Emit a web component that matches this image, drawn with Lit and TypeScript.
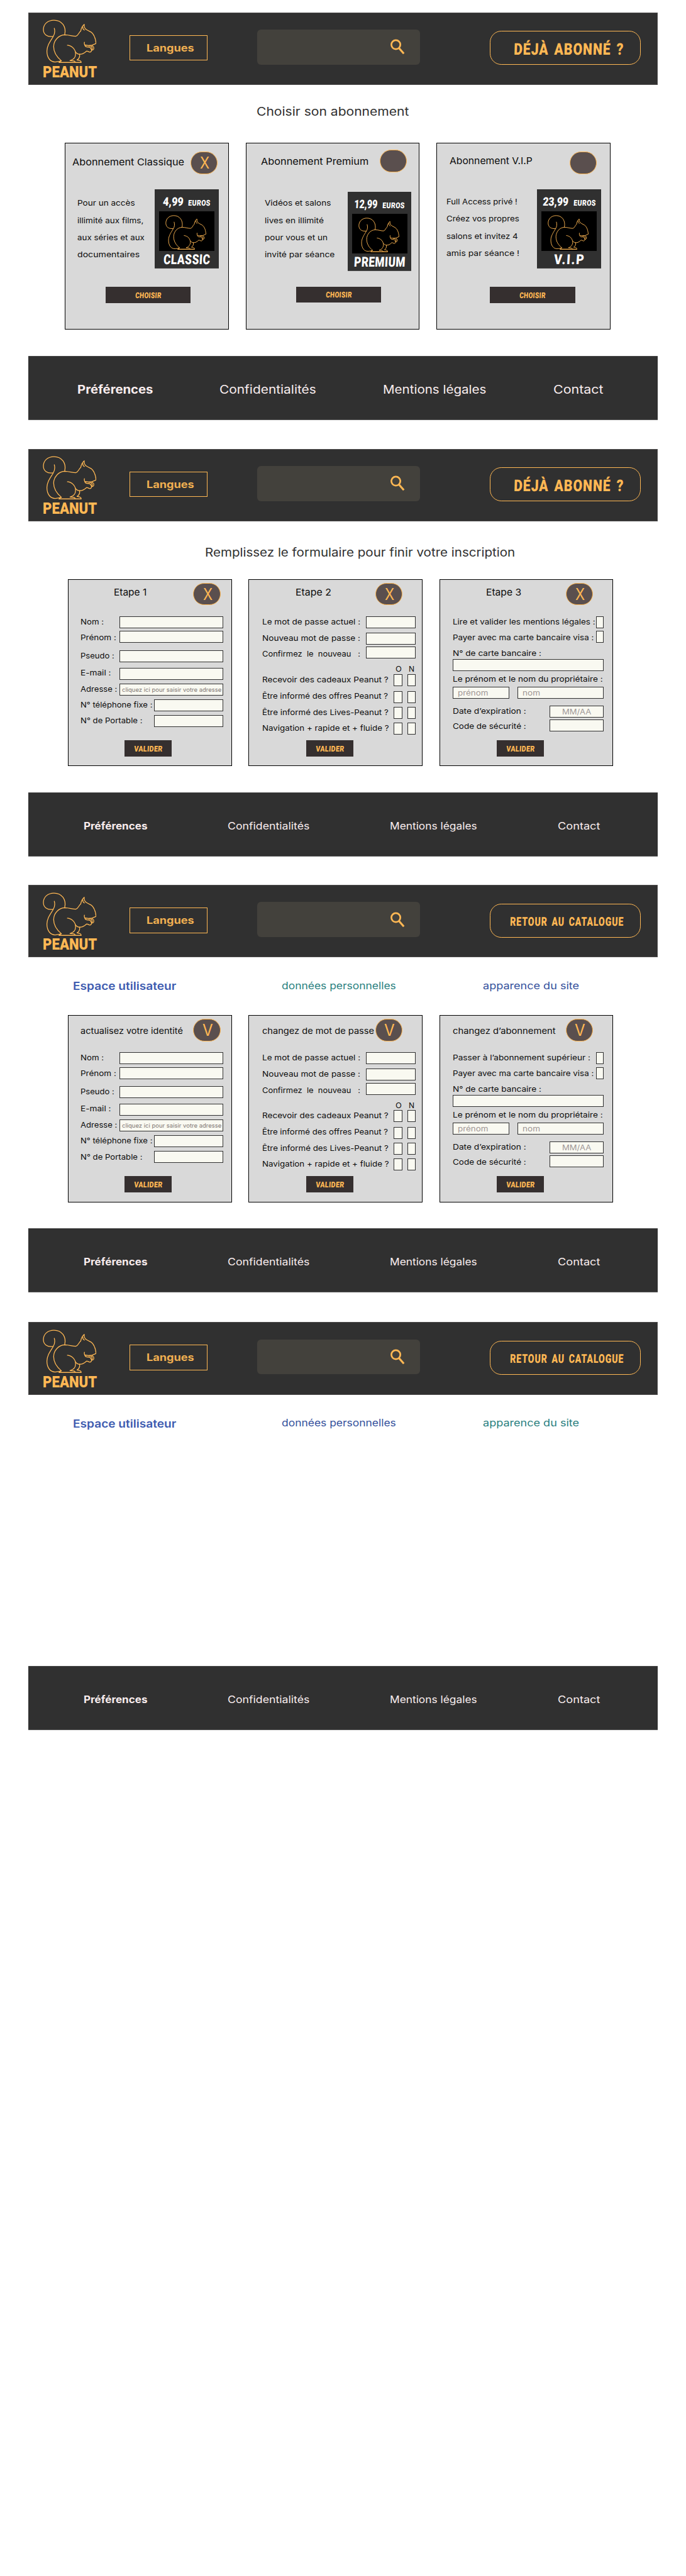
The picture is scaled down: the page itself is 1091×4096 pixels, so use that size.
import { LitElement, html, css, svg, nothing } from "lit";
import { customElement, property } from "lit/decorators.js";
import { classMap } from "lit/directives/class-map.js";

/* One line of real text, fitted horizontally to a given width. */
@customElement("fit-text")
class FitText extends LitElement {
  @property({ type: Number }) w = 100;

  static styles = css`
    :host {
      display: inline-block;
      flex: none;
      text-align: left;
      white-space: pre;
      vertical-align: baseline;
    }
    .run {
      display: inline-block;
      transform-origin: 0 60%;
    }
  `;

  render() {
    return html`<span class="run"><slot></slot></span>`;
  }

  updated() {
    const run = this.renderRoot.querySelector(".run") as HTMLElement;
    this.style.width = `${this.w}px`;
    run.style.transform = "none";
    const target = this.getBoundingClientRect().width;
    const natural = run.getBoundingClientRect().width;
    if (natural > 0) run.style.transform = `scaleX(${target / natural}) skewX(var(--lean, 0deg))`;
  }
}

const fit = (text: string, w: number) => html`<fit-text .w=${w}>${text}</fit-text>`;

const squirrel = (cls: string) => html`
  <svg class=${cls} viewBox="20 16 336 274" preserveAspectRatio="none" fill="none"
    stroke="#ffb854" stroke-linejoin="round" stroke-linecap="round" aria-hidden="true">
    ${svg`
      <path d="M157 111C169 60 138 20 90 20C50 20 24 46 24 79C24 108 46 127 84 122"/>
      <path d="M92 71C98 92 95 108 84 125C66 154 46 180 46 214C46 256 68 285 104 281C114 280 126 278 136 274C110 252 88 226 88 186C88 148 118 112 160 112C186 113 205 121 226 121C241 118 243 100 257 88C260 70 264 58 279 46C277 64 284 76 297 82L322 95C345 112 350 140 353 166L328 177C310 179 292 179 282 175C279 170 279 164 280 158"/>
      <path d="M270 63C269 72 274 79 280 82"/>
      <path d="M283 178C286 189 296 188 306 188C318 189 322 196 324 206C326 216 318 222 310 219C304 216 299 214 294 213C284 222 274 232 256 233C243 234 232 230 225 220"/>
      <path d="M308 181C320 180 328 186 328 194C330 199 328 204 325 208C336 208 340 200 338 194C342 186 330 184 326 178"/>
      <path d="M174 177C204 180 226 204 225 232C224 252 210 268 190 273L206 274C216 275 223 278 222 284"/>
      <path d="M250 234C252 250 246 262 234 269C248 271 262 274 259 285L122 285C123 280 130 277 136 274"/>
      <path d="M122 285L259 285"/>
    `}
  </svg>
`;

@customElement("site-header")
class SiteHeader extends LitElement {
  @property() action = "DÉJÀ ABONNÉ ?";

  static styles = css`
    :host {
      display: block;
    }
    .bar {
      box-sizing: border-box;
      height: 152px;
      display: flex;
      align-items: flex-start;
      padding-left: 28px;
      background: #303030;
      border: 1px solid #4c4a4a;
      color: #ffb854;
    }
    .logo {
      width: 114px;
      padding-top: 14px;
      display: flex;
      flex-direction: column;
    }
    .mark {
      width: 113px;
      height: 92px;
      stroke-width: 5;
    }
    .name {
      font: 900 34.5px/36px Roboto, sans-serif;
    }
    .lang {
      box-sizing: border-box;
      width: 163px;
      height: 54px;
      margin: 46px 0 0 69px;
      padding-left: 34px;
      border: 1px solid #ffb854;
      color: #efaf51;
      font: 700 21.5px/52px Inter, sans-serif;
    }
    .search {
      box-sizing: border-box;
      width: 341px;
      height: 73px;
      margin: 35px 0 0 105px;
      padding: 20px 31px 0 0;
      display: flex;
      justify-content: flex-end;
      border-radius: 8px;
      background: #43413c;
    }
    .lens {
      width: 30px;
      height: 33px;
    }
    .action {
      box-sizing: border-box;
      width: 317px;
      height: 71px;
      margin: 38px 0 0 147px;
      padding: 2px 0 0 49px;
      border: 1px solid #ffb854;
      border-radius: 24px;
      font: 900 34px/69px Roboto, sans-serif;
      letter-spacing: 1.5px;
      word-spacing: 4px;
      --lean: -2deg;
    }
    .action.small {
      padding: 3px 0 0 41px;
      font-size: 25.5px;
    }
  `;

  render() {
    const small = this.action.length > 14;
    return html`
      <header class="bar">
        <div class="logo">${squirrel("mark")}<div class="name">${fit("PEANUT", 114)}</div></div>
        <div class="lang">${fit("Langues", 100)}</div>
        <div class="search">
          <svg class="lens" viewBox="0 0 30 33" preserveAspectRatio="none" fill="none" stroke="#ffb854">
            <circle cx="11.3" cy="12" r="9.4" stroke-width="3.6" />
            <path d="M17.6 18.8L28 30.6" stroke-width="4.2" />
          </svg>
        </div>
        <div class=${classMap({ action: true, small })}>${fit(this.action, small ? 239 : 231)}</div>
      </header>
    `;
  }
}

@customElement("site-footer")
class SiteFooter extends LitElement {
  @property({ type: Boolean }) large = false;

  static styles = css`
    :host {
      display: block;
    }
    .bar {
      box-sizing: border-box;
      height: 135px;
      display: flex;
      padding: 49px 0 0 115px;
      gap: 169px;
      background: #303030;
      border-top: 1px solid #454545;
      border-bottom: 1px solid #5d5d5d;
      color: #f9edee;
      font: 400 21.3px/40px Inter, sans-serif;
    }
    .bar.large {
      padding-left: 102px;
      gap: 140px;
      font-size: 24.5px;
    }
    .first {
      font-weight: 700;
    }
  `;

  render() {
    const w = this.large ? [159, 203, 217, 105] : [134, 172, 183, 89];
    return html`
      <footer class=${classMap({ bar: true, large: this.large })}>
        <span class="first">${fit("Préférences", w[0])}</span>
        <span>${fit("Confidentialités", w[1])}</span>
        <span>${fit("Mentions légales", w[2])}</span>
        <span>${fit("Contact", w[3])}</span>
      </footer>
    `;
  }
}

const cardStyles = css`
  :host {
    display: block;
  }
  .card {
    box-sizing: border-box;
    height: 393px;
    display: flex;
    flex-direction: column;
    background: #d9d9d9;
    border: 1px solid #000;
    color: #0c0c0c;
    font: 400 16px/25px Inter, sans-serif;
  }
  .head {
    display: flex;
    justify-content: space-between;
    font-size: 19.7px;
    line-height: 30px;
  }
  .badge {
    box-sizing: border-box;
    flex: none;
    width: 57px;
    height: 47px;
    padding-left: 3px;
    border: 1px solid #ffb854;
    border-radius: 24px;
    background: #5a4f4e;
    color: #ffb854;
    font: 400 33.5px/45px Inter, sans-serif;
    text-align: center;
  }
  .button {
    box-sizing: border-box;
    height: 34px;
    padding-top: 1px;
    background: #352f2f;
    color: #ffb854;
    font: 900 16.8px/34px Roboto, sans-serif;
    letter-spacing: 0.6px;
    text-align: center;
    --lean: -5deg;
  }
`;

interface Plan {
  kind: string;
  title: string;
  titleW: number;
  badge: string;
  lines: [string, number][];
  price: string;
  priceW: number;
  label: string;
  labelW: number;
}

const plans: Plan[] = [
  {
    kind: "classic", title: "Abonnement Classique", titleW: 235, badge: "X",
    lines: [["Pour un accès", 121], ["illimité aux films,", 139], ["aux séries et aux", 141], ["documentaires", 131]],
    price: "4,99", priceW: 43, label: "CLASSIC", labelW: 98,
  },
  {
    kind: "premium", title: "Abonnement Premium", titleW: 226, badge: "",
    lines: [["Vidéos et salons", 139], ["lives en illimité", 124], ["pour vous et un", 132], ["invité par séance", 147]],
    price: "12,99", priceW: 49, label: "PREMIUM", labelW: 108,
  },
  {
    kind: "vip", title: "Abonnement V.I.P", titleW: 174, badge: "",
    lines: [["Full Access privé !", 149], ["Créez vos propres", 153], ["salons et invitez 4", 150], ["amis par séance !", 153]],
    price: "23,99", priceW: 54, label: "V.I.P", labelW: 65,
  },
];

@customElement("plan-card")
class PlanCard extends LitElement {
  @property({ attribute: false }) plan!: Plan;

  static styles = [
    cardStyles,
    css`
      .classic { width: 345px; }
      .premium, .vip { width: 365px; }
      .head { height: 97px; box-sizing: border-box; padding: 18px 23px 0 14px; }
      .premium .head { padding: 14px 26px 0 30px; }
      .vip .head { padding: 18px 27px 0 27px; }
      .title { padding-top: 8px; }
      .premium .title { padding-top: 10px; }
      .vip .title { padding-top: 5px; }
      .body { display: flex; justify-content: space-between; align-items: flex-start; height: 204px; box-sizing: border-box; padding: 0 21px 0 25px; }
      .premium .body { padding: 0 16px 0 39px; }
      .vip .body { padding: 0 18px 0 20px; }
      .copy { padding-top: 11px; line-height: 36px; display: flex; flex-direction: column; }
      .vip .copy { padding-top: 8px; }
      .poster { width: 134px; height: 166px; box-sizing: border-box; background: #303030; border-bottom: 1px solid #4a4a4a; color: #fff; text-align: center; --lean: -4deg; }
      .premium .poster { margin-top: 5px; }
      .price { box-sizing: border-box; height: 46px; padding-top: 4px; display: flex; justify-content: center; align-items: baseline; gap: 10px; font: 900 24.6px/46px Roboto, sans-serif; }
      .unit { font-size: 16.8px; letter-spacing: 0.6px; }
      .photo { box-sizing: border-box; width: 116px; height: 83px; margin: 0 auto; padding: 8px 0 0 13px; background: #000; text-align: left; }
      .mark { display: block; width: 86px; height: 73px; stroke-width: 4.6; }
      .label { font: 900 29px/37px Roboto, sans-serif; letter-spacing: 0.8px; }
      .vip .label { letter-spacing: 2.5px; }
      .button { width: 179px; margin: 1px 0 0 84px; }
      .premium .button { margin: 0 0 0 104px; }
      .vip .button { margin-left: 111px; }
    `,
  ];

  render() {
    const p = this.plan;
    return html`
      <article class="card ${p.kind}">
        <div class="head">
          <div class="title">${fit(p.title, p.titleW)}</div>
          <div class="badge">${p.badge ? fit(p.badge, 20) : nothing}</div>
        </div>
        <div class="body">
          <div class="copy">${p.lines.map(([t, w]) => fit(t, w))}</div>
          <div class="poster">
            <div class="price">${fit(p.price, p.priceW)}<span class="unit">${fit("EUROS", 47)}</span></div>
            <div class="photo">${squirrel("mark")}</div>
            <div class="label">${fit(p.label, p.labelW)}</div>
          </div>
        </div>
        <div class="button">${fit("CHOISIR", 55)}</div>
      </article>
    `;
  }
}

@customElement("form-card")
class FormCard extends LitElement {
  @property() kind: "identity" | "access" | "payment" = "identity";
  @property() heading = "";
  @property({ type: Number }) headingWidth = 70;
  @property() badge = "X";
  @property({ type: Boolean }) editing = false;

  static styles = [
    cardStyles,
    css`
      .identity { width: 345px; }
      .access, .payment { width: 365px; }
      .head { height: 77px; box-sizing: border-box; padding: 7px 23px 0 95px; }
      .access .head { padding: 7px 41px 0 97px; }
      .payment .head { padding: 7px 41px 0 97px; }
      .editing .head { padding-left: 25px; font-size: 17.4px; }
      .editing.access .head, .editing.payment .head { padding-left: 27px; }
      .title { padding-top: 6px; }
      .editing .title { padding-top: 11px; }
      .rows { display: flex; flex-direction: column; height: 260px; padding: 0 17px 0 26px; }
      .access .rows { padding: 0 13px 0 27px; }
      .payment .rows { padding: 0 19px 0 27px; }
      .row { display: flex; justify-content: space-between; align-items: flex-start; height: 25px; flex: none; }
      .box { box-sizing: border-box; height: 25px; background: #f9f9f1; border: 1px solid #303030; flex: none; color: #a09796; line-height: 23px; }
      .wide { width: 218px; }
      .mid { width: 145px; }
      .pass { width: 104px; }
      .tick { width: 18px; }
      .slim { width: 16px; }
      .full { width: 317px; }
      .first { width: 119px; padding-left: 9px; }
      .last { width: 180px; padding-left: 9px; }
      .date { width: 113px; padding-left: 25px; }
      .hint { padding-left: 4px; font-size: 11.8px; color: #7d7572; line-height: 24px; }
      .ticks { display: flex; gap: 10px; }

      .identity .row:nth-child(2) { margin-top: 6px; }
      .identity .row:nth-child(3) { margin-top: 15px; }
      .identity .row:nth-child(4) { margin-top: 12px; }
      .identity .row:nth-child(n + 5) { margin-top: 8px; }
      .identity .row:nth-child(2) .label { padding-top: 2px; }
      .identity .row:nth-child(4) .label { line-height: 21px; }
      .identity .row:nth-child(7) .label { padding-top: 1px; }

      .access .row:nth-child(2) { margin-top: 9px; }
      .access .row:nth-child(3) { margin-top: 5px; }
      .access .row:nth-child(3) .label { padding-top: 4px; }
      .access .row.letters { height: 21px; margin-top: 12px; line-height: 20px; justify-content: flex-end; gap: 15px; padding-right: 3px; }
      .access .row:nth-child(6) { margin-top: 10px; }
      .access .row:nth-child(n + 7) { margin-top: 8px; }
      .access .row:nth-child(6) .label { line-height: 20px; }

      .payment .row:nth-child(2) { margin-top: 6px; }
      .payment .row:nth-child(2) .label { padding-top: 2px; }
      .payment .caption { height: 25px; flex: none; margin-top: 10px; }
      .payment .caption.owner { margin-top: 5px; }
      .payment .card-number { margin-top: -1px; }
      .payment .names { margin-top: 3px; }
      .payment .expiry { margin-top: 15px; }
      .payment .code { margin-top: 4px; }
      .payment .code .label { padding-top: 2px; }

      .button { width: 99px; margin-left: 118px; }
      .access .button, .payment .button { margin-left: 120px; }
    `,
  ];

  identity() {
    const rows: [string, number, string][] = [
      ["Nom :", 49, "wide"], ["Prénom :", 75, "wide"], ["Pseudo :", 71, "wide"], ["E-mail :", 64, "wide"],
      ["Adresse :", 77, "wide hint"], ["N° téléphone fixe :", 151, "mid"], ["N° de Portable :", 130, "mid"],
    ];
    return rows.map(([t, w, c]) => html`
      <div class="row">
        <span class="label">${fit(t, w)}</span>
        <div class="box ${c}">${c.includes("hint") ? fit("cliquez ici pour saisir votre adresse", 209) : nothing}</div>
      </div>`);
  }

  access() {
    const pass: [string, number][] = [
      ["Le mot de passe actuel :", 206], ["Nouveau mot de passe :", 206], ["Confirmez  le  nouveau   :", 206],
    ];
    const asks: [string, number][] = [
      ["Recevoir des cadeaux Peanut ?", 265], ["Être informé des offres Peanut ?", 264],
      ["Être informé des Lives-Peanut ?", 265], ["Navigation + rapide et + fluide ?", 266],
    ];
    return html`
      ${pass.map(([t, w]) => html`<div class="row"><span class="label">${fit(t, w)}</span><div class="box pass"></div></div>`)}
      <div class="row letters">${fit("O", 13)}${fit("N", 12)}</div>
      ${asks.map(([t, w]) => html`
        <div class="row">
          <span class="label">${fit(t, w)}</span>
          <div class="ticks"><div class="box tick"></div><div class="box tick"></div></div>
        </div>`)}
    `;
  }

  payment() {
    return html`
      <div class="row">
        <span class="label">${this.editing ? fit("Passer à l’abonnement supérieur :", 289) : fit("Lire et valider les mentions légales :", 299)}</span>
        <div class="box slim"></div>
      </div>
      <div class="row"><span class="label">${fit("Payer avec ma carte bancaire visa :", 296)}</span><div class="box slim"></div></div>
      <div class="caption">${fit("N° de carte bancaire :", 186)}</div>
      <div class="row card-number"><div class="box full"></div></div>
      <div class="caption owner">${fit("Le prénom et le nom du propriétaire :", 315)}</div>
      <div class="row names"><div class="box first">${fit("prénom", 64)}</div><div class="box last">${fit("nom", 37)}</div></div>
      <div class="row expiry"><span class="label">${fit("Date d’expiration :", 154)}</span><div class="box date">${fit("MM/AA", 61)}</div></div>
      <div class="row code"><span class="label">${fit("Code de sécurité :", 154)}</span><div class="box date"></div></div>
    `;
  }

  render() {
    return html`
      <article class=${classMap({ card: true, [this.kind]: true, editing: this.editing })}>
        <div class="head">
          <div class="title">${fit(this.heading, this.headingWidth)}</div>
          <div class="badge">${fit(this.badge, this.badge === "X" ? 20 : 22)}</div>
        </div>
        <div class="rows">${this[this.kind]()}</div>
        <div class="button">${fit("VALIDER", 60)}</div>
      </article>
    `;
  }
}

@customElement("app-root")
class AppRoot extends LitElement {
  static styles = css`
    :host {
      display: block;
      zoom: 0.75766;
      width: 1440px;
      height: 5406px;
      overflow: hidden;
      background: #fff;
      font-family: Inter, sans-serif;
    }
    .screens {
      display: flex;
      flex-direction: column;
      padding: 26px 60px 0;
      gap: 60px;
    }
    .screen {
      height: 856px;
      display: flex;
      flex-direction: column;
    }
    .screen.third {
      margin-top: -1px;
    }
    .screen.fourth {
      margin-top: 2px;
    }
    .content {
      height: 569px;
    }
    .intro {
      box-sizing: border-box;
      height: 121px;
      padding: 36px 0 0 478px;
      color: #303030;
      font-size: 24.5px;
      line-height: 40px;
    }
    .intro.signup {
      padding: 45px 0 0 370px;
    }
    .tabs {
      box-sizing: border-box;
      height: 121px;
      padding: 39px 0 0 93px;
      display: flex;
      font-size: 21.4px;
      line-height: 40px;
      color: #34509c;
    }
    .space {
      padding-top: 2px;
      margin-right: 221px;
      font-size: 22.4px;
      font-weight: 600;
      color: #3d5bb0;
    }
    .data {
      margin-right: 183px;
    }
    .current {
      color: #2a7f80;
    }
    .cards {
      display: flex;
      gap: 35px;
      padding-left: 82px;
    }
    .cards.plans {
      padding-left: 76px;
    }
  `;

  tabs(current: "data" | "look") {
    return html`
      <nav class="tabs">
        <span class="space">${fit("Espace utilisateur", 217)}</span>
        <span class=${classMap({ data: true, current: current === "data" })}>${fit("données personnelles", 240)}</span>
        <span class=${classMap({ current: current === "look" })}>${fit("apparence du site", 202)}</span>
      </nav>
    `;
  }

  render() {
    return html`
      <div class="screens">
        <section class="screen">
          <site-header></site-header>
          <div class="content">
            <div class="intro">${fit("Choisir son abonnement", 320)}</div>
            <div class="cards plans">${plans.map((p) => html`<plan-card .plan=${p}></plan-card>`)}</div>
          </div>
          <site-footer large></site-footer>
        </section>
        <section class="screen">
          <site-header></site-header>
          <div class="content">
            <div class="intro signup">${fit("Remplissez le formulaire pour finir votre inscription", 651)}</div>
            <div class="cards">
              <form-card kind="identity" heading="Etape 1" .headingWidth=${69}></form-card>
              <form-card kind="access" heading="Etape 2" .headingWidth=${75}></form-card>
              <form-card kind="payment" heading="Etape 3" .headingWidth=${74}></form-card>
            </div>
          </div>
          <site-footer></site-footer>
        </section>
        <section class="screen third">
          <site-header action="RETOUR AU CATALOGUE"></site-header>
          <div class="content">
            ${this.tabs("data")}
            <div class="cards">
              <form-card kind="identity" heading="actualisez votre identité" .headingWidth=${215} badge="V" editing></form-card>
              <form-card kind="access" heading="changez de mot de passe" .headingWidth=${235} badge="V" editing></form-card>
              <form-card kind="payment" heading="changez d’abonnement" .headingWidth=${216} badge="V" editing></form-card>
            </div>
          </div>
          <site-footer></site-footer>
        </section>
        <section class="screen fourth">
          <site-header action="RETOUR AU CATALOGUE"></site-header>
          <div class="content">${this.tabs("look")}</div>
          <site-footer></site-footer>
        </section>
      </div>
    `;
  }
}
